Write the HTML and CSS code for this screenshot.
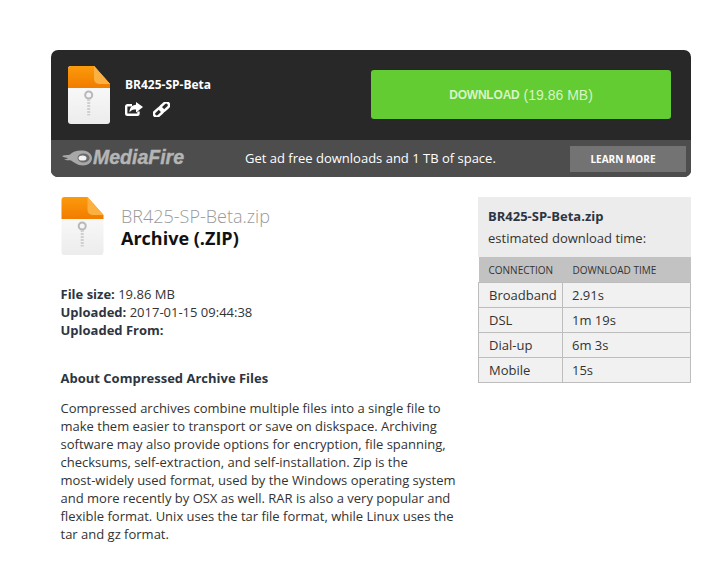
FILE: index.html
```html
<!DOCTYPE html>
<html>
    <head>
        <link rel="stylesheet" href="styles.css">
    </head>
    <body>
        <svg class="defs" width="0" height="0">
            <symbol id="zipfile" viewBox="0 0 42 58">
                <defs>
                    <linearGradient id="paper" x1="0" y1="0" x2="0" y2="1">
                        <stop offset="0" stop-color="#ffffff"/>
                        <stop offset="1" stop-color="#ececec"/>
                    </linearGradient>
                    <linearGradient id="band" x1="0" y1="0" x2="0" y2="1">
                        <stop offset="0" stop-color="#fb9a0b"/>
                        <stop offset="1" stop-color="#f27c00"/>
                    </linearGradient>
                </defs>
                <path d="M3 0H26L42 18V55a3 3 0 0 1-3 3H3a3 3 0 0 1-3-3V3a3 3 0 0 1 3-3Z" fill="url(#paper)"/>
                <path d="M3 0H26L42 18V22H0V3a3 3 0 0 1 3-3Z" fill="url(#band)"/>
                <path d="M26 0L42 18H31a5 5 0 0 1-5-5Z" fill="#fbb040"/>
                <circle cx="20.700" cy="29" r="3.500" fill="none" stroke="#b8b8b8" stroke-width="2"/>
                <path d="M20.700 33V49.500" fill="none" stroke="#cfcfcf" stroke-width="3" stroke-dasharray="2 1"/>
            </symbol>
        </svg>

        <div class="page">
            <div class="panel">
                <div class="panel-top">
                    <svg class="panel-icon"><use href="#zipfile"/></svg>
                    <div class="panel-file">
                        <div class="panel-name">BR425-SP-Beta</div>
                        <div class="panel-actions">
                            <svg width="18" height="14" viewBox="0 0 18 14">
                                <path d="M11 0L18 5L11 10.500V7.500C8 7.500 6 8 4.500 10.500C4.300 6 7 3 11 2.800Z" fill="#ffffff"/>
                                <path d="M7 3.200H2.500A1.300 1.300 0 0 0 1.200 4.500V11.500A1.300 1.300 0 0 0 2.500 12.800H12.200A1.300 1.300 0 0 0 13.500 11.500V9.500" fill="none" stroke="#ffffff" stroke-width="2.400"/>
                            </svg>
                            <svg width="17" height="15" viewBox="0 0 17 15">
                                <g transform="rotate(-42 8.500 7.500)" fill="none" stroke="#ffffff" stroke-width="2.500">
                                    <rect x="-0.700" y="4.700" width="10.200" height="5.600" rx="2.800"/>
                                    <rect x="7.500" y="4.700" width="10.200" height="5.600" rx="2.800"/>
                                </g>
                            </svg>
                        </div>
                    </div>
                    <a class="download-btn"><b>DOWNLOAD</b> (19.86 MB)</a>
                </div>
                <div class="panel-bottom">
                    <div class="mf-logo">
                        <svg width="30" height="16" viewBox="0 0 30 16">
                            <path d="M0 6C4 4.500 6 5.500 8 4.500C11 1 16 0 21 0.500C26 1 30 4 30 8C30 12.500 26 15.500 21 15.500C15 15.500 12 12 9 10.500C7 9.500 5 11 2 9.500C4 9.500 5 8.500 6 8C4 7.500 2 7.500 0 6Z" fill="#a8a8a8"/>
                            <ellipse cx="21.500" cy="8" rx="6" ry="4.500" fill="#6a6a6a"/>
                            <ellipse cx="20.500" cy="8" rx="4" ry="2.600" fill="#f2f2f2"/>
                        </svg>
                        <span>MediaFire</span>
                    </div>
                    <div class="promo">Get ad free downloads and 1 TB of space.</div>
                    <a class="learn-btn">LEARN MORE</a>
                </div>
            </div>

            <div class="columns">
                <div class="main">
                    <div class="file-head">
                        <svg class="file-icon"><use href="#zipfile"/></svg>
                        <div>
                            <div class="file-name">BR425-SP-Beta.zip</div>
                            <div class="file-type">Archive (.ZIP)</div>
                        </div>
                    </div>
                    <ul class="details">
                        <li><b>File size:</b> 19.86 MB</li>
                        <li><b>Uploaded:</b> 2017-01-15 09:44:38</li>
                        <li><b>Uploaded From:</b></li>
                    </ul>
                    <h4>About Compressed Archive Files</h4>
                    <p>Compressed archives combine multiple files into a single file to make them easier to transport or save on diskspace. Archiving software may also provide options for encryption, file spanning, checksums, self-extraction, and self-installation. Zip is the<br>most-widely used format, used by the Windows operating system and more recently by OSX as well. RAR is also a very popular and flexible format. Unix uses the tar file format, while Linux uses the tar and gz format.</p>
                </div>

                <div class="side">
                    <div class="side-head">
                        <b>BR425-SP-Beta.zip</b><br>
                        estimated download time:
                    </div>
                    <table>
                        <tr><th>CONNECTION</th><th>DOWNLOAD TIME</th></tr>
                        <tr><td>Broadband</td><td>2.91s</td></tr>
                        <tr><td>DSL</td><td>1m 19s</td></tr>
                        <tr><td>Dial-up</td><td>6m 3s</td></tr>
                        <tr><td>Mobile</td><td>15s</td></tr>
                    </table>
                </div>
            </div>
        </div>
    </body>
</html>
```

FILE: styles.css
```css
* { margin: 0; padding: 0; box-sizing: border-box; font-family: "Open Sans", sans-serif; color: #333333; }
html, body { width: 100%; height: 100%; background: #ffffff; }
.defs { display: block; height: 0; }

.page { width: 640px; margin-left: 51px; padding-top: 50px; }

.panel { background: #282828; border-radius: 7px; overflow: hidden; }
.panel-top { height: 90px; display: flex; align-items: flex-start; padding: 16px 20px 0 17px; }
.panel-icon { width: 42px; height: 58px; }
.panel-file { margin-left: 15px; padding-top: 10px; flex: 1; }
.panel-name { font-size: 12px; font-weight: 700; color: #ffffff; line-height: 17px; }
.panel-actions { display: flex; gap: 10px; margin-top: 9px; }
.download-btn { width: 300px; height: 49px; margin-top: 4px; background: #62cc32; border-radius: 3px; display: flex; align-items: center; justify-content: center; gap: 4px; font-family: "Liberation Sans", sans-serif; font-size: 14px; color: #d8f3c6; }
.download-btn b { font-family: "Liberation Sans", sans-serif; font-size: 12px; letter-spacing: -0.200px; color: #d8f3c6; }

.panel-bottom { height: 37px; background: #4d4d4d; display: flex; align-items: center; padding: 0 5px 2px 11px; }
.mf-logo { width: 183px; display: flex; align-items: center; gap: 1px; }
.mf-logo span { font-family: "Liberation Sans", sans-serif; font-size: 19.500px; font-weight: 700; font-style: italic; color: #b5b5b5; -webkit-text-stroke: 0.4px #b5b5b5; }
.promo { flex: 1; font-size: 13px; color: #ffffff; }
.learn-btn { width: 116px; height: 26px; margin-top: 2px; padding-right: 10px; background: #737373; display: flex; align-items: center; justify-content: center; font-size: 10px; font-weight: 700; color: #ffffff; }

.columns { display: flex; justify-content: space-between; padding-top: 20px; }

.main { width: 398.500px; margin-left: 9.500px; }
.file-head { display: flex; gap: 17px; margin-left: 0.500px; }
.file-icon { width: 43px; height: 58px; }
.file-name { font-size: 18px; font-weight: 300; line-height: 22px; color: #999999; margin-top: 8px; }
.file-type { font-size: 18px; line-height: 22px; font-weight: 700; color: #111111; margin-top: 0; }

.details { list-style: none; margin-top: 30px; font-size: 13px; line-height: 18px; }
.details li { font-size: 13px; }
.details b { font-size: 13px; color: #2d3540; }

h4 { font-size: 13px; line-height: 18px; font-weight: 700; color: #2d3540; margin-top: 30px; }
p { font-size: 13px; line-height: 18px; margin-top: 12px; }

.side { width: 213px; }
.side-head { background: #ececec; height: 60px; padding: 8px 10px 0 10px; font-size: 13px; line-height: 22px; }
.side-head b { font-size: 13px; color: #2d3540; }

table { width: 100%; border-collapse: collapse; }
th { background: #c2c2c2; height: 25px; padding: 1px 0 0 10px; text-align: left; font-size: 10px; font-weight: 400; }
td { background: #f1f1f1; height: 25px; border: 1px solid #bdbdbd; font-size: 13px; padding-left: 10px; }
td:first-child { width: 84px; }
td:last-child { padding-left: 9px; }
```
